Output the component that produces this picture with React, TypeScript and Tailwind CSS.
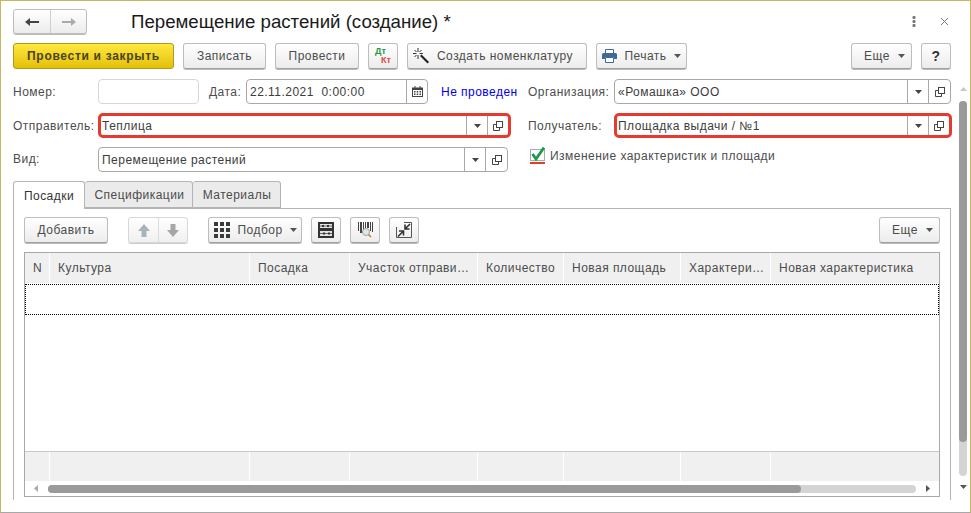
import React from 'react';

const Caret = ({ color = '#444' }: { color?: string }) => (
  <svg width="7" height="4" viewBox="0 0 7 4" className="shrink-0">
    <path d="M0 0h7L3.500 4z" fill={color} />
  </svg>
);

const OpenIcon = () => (
  <svg width="10" height="10" viewBox="0 0 10 10" fill="none" stroke="#444" strokeWidth="1">
    <rect x="3.500" y="0.500" width="6" height="6" />
    <path d="M3 3.500H0.500v6h6V7" />
  </svg>
);

const CalendarIcon = () => (
  <svg width="11" height="11" viewBox="0 0 11 11">
    <path d="M0 1.500h11V11H0z" fill="#444" />
    <path d="M1 4h9v6H1z" fill="#fff" />
    <path d="M2.500 0h1v2.500h-1zM7.500 0h1v2.500h-1zM2 5h1.500v1.500H2zM4.700 5h1.500v1.500H4.700zM7.500 5H9v1.500H7.500zM2 7.500h1.500V9H2zM4.700 7.500h1.500V9H4.700zM7.500 7.500H9V9H7.500z" fill="#444" />
  </svg>
);

const Btn = ({ className = '', children }: { className?: string; children?: React.ReactNode }) => (
  <div
    className={`flex h-[26px] shrink-0 items-center justify-center rounded-[3px] border border-[#bdbdbd] border-b-[#a0a0a0] bg-gradient-to-b from-white to-[#ececec] shadow-[0_1px_0_#bbb] ${className}`}
  >
    {children}
  </div>
);

const Field = ({
  className,
  text,
  red = false,
  caret = true,
  open = true,
}: {
  className: string;
  text: string;
  red?: boolean;
  caret?: boolean;
  open?: boolean;
}) => (
  <div
    className={`flex h-[25px] shrink-0 items-center bg-white ${
      red ? 'rounded-[5px] border-[3px] border-[#e63a2e]' : 'rounded-[4px] border border-[#a8a8a8]'
    } ${className}`}
  >
    <span className={`flex-1 truncate whitespace-pre text-[#3c3c3c] ${red ? 'pl-px' : 'pl-[3px]'}`}>{text}</span>
    {caret && (
      <span className="flex h-full w-[21px] items-center justify-center border-l border-[#a8a8a8]">
        <Caret />
      </span>
    )}
    {open && (
      <span className={`flex h-full items-center justify-center border-l border-[#a8a8a8] ${red ? 'w-[21px]' : 'w-[22px]'}`}>
        <OpenIcon />
      </span>
    )}
  </div>
);

const columns = [
  { label: 'N', width: 'w-[24px]' },
  { label: 'Культура', width: 'w-[199px]' },
  { label: 'Посадка', width: 'w-[99px]' },
  { label: 'Участок отправи…', width: 'w-[127px]' },
  { label: 'Количество', width: 'w-[85px]' },
  { label: 'Новая площадь', width: 'w-[116px]' },
  { label: 'Характери…', width: 'w-[89px]' },
  { label: 'Новая характеристика', width: 'w-[168px]' },
];

export default function App() {
  return (
    <div
      className="flex h-[513px] w-[971px] flex-col overflow-hidden border border-[#c8b660] border-b-[#a8a8a8] bg-white text-[12px] tracking-[0.47px] text-[#4c4c4c]"
      style={{ fontFamily: '"Liberation Sans", Arial, sans-serif' }}
    >
      {/* title row */}
      <div className="flex h-[25px] shrink-0 items-center pl-3 mt-2">
        <div className="flex h-[25px] w-[74px] rounded-[3px] border border-[#bdbdbd] bg-gradient-to-b from-white to-[#ececec] shadow-[0_1px_0_#bbb]">
          <span className="flex w-[37px] items-center justify-center border-r border-[#cfcfcf]">
            <svg width="14" height="8" viewBox="0 0 14 8"><path d="M0 4l5-4v3h9v2H5v3z" fill="#444" /></svg>
          </span>
          <span className="flex flex-1 items-center justify-center">
            <svg width="14" height="8" viewBox="0 0 14 8"><path d="M14 4L9 0v3H0v2h9v3z" fill="#aaa" /></svg>
          </span>
        </div>
        <h1 className="ml-[44px] text-[18.67px] font-normal tracking-normal text-[#1a1a1a]">
          Перемещение растений (создание) *
        </h1>
        <div className="ml-auto flex items-center pr-[21px]">
          <svg width="4" height="11" viewBox="0 0 4 11" fill="#777">
            <rect x="0.500" y="0" width="3" height="3" rx="1" />
            <rect x="0.500" y="4" width="3" height="3" rx="1" />
            <rect x="0.500" y="8" width="3" height="3" rx="1" />
          </svg>
          <svg width="9" height="9" viewBox="0 0 9 9" className="ml-[24px]" stroke="#777" strokeWidth="1">
            <path d="M1 1l7 7M8 1L1 8" />
          </svg>
        </div>
      </div>

      <div className="mt-[9px] flex flex-1 pl-3">
        <div className="flex w-[939px] shrink-0 flex-col">
          {/* command bar */}
          <div className="flex gap-[9px] pr-px">
            <div className="flex h-[26px] w-[161px] items-center justify-center rounded-[3px] border border-[#b09a20] bg-gradient-to-b from-[#ffe83c] to-[#e4c000] font-bold tracking-[0.7px] text-[#4a4420]">
              Провести и закрыть
            </div>
            <Btn className="w-[83px]">Записать</Btn>
            <Btn className="w-[84px]">Провести</Btn>
            <Btn className="w-[30px]">
              <span className="flex flex-col text-[9px] font-bold leading-[9px] tracking-normal">
                <span className="text-[#1f9a4c]">Дт</span>
                <span className="ml-[6px] text-[#e2454a]">Кт</span>
              </span>
            </Btn>
            <Btn className="w-[180px] gap-[8px] pr-[8px]">
              <svg width="16" height="16" viewBox="0 0 16 16">
                <path d="M7 8l1.500-1.500L16 14l-1.500 1.500z" fill="#222" />
                <path d="M5 0v4M5 7v4M0 5.500h3.500M6.500 5.500H10M1.500 2l2 2M8.500 2l-2 2M1.500 9l2-2" stroke="#333" strokeWidth="1" />
              </svg>
              <span>Создать номенклатуру</span>
            </Btn>
            <Btn className="w-[91px] gap-[7px]">
              <svg width="15" height="14" viewBox="0 0 15 14">
                <path d="M3.500 0.500h8v4h-8z" fill="#fff" stroke="#3f6a94" />
                <path d="M1.500 4h12A1.500 1.500 0 0 1 15 5.500V10h-3V8H3v2H0V5.500A1.500 1.500 0 0 1 1.500 4z" fill="#3f6a94" />
                <path d="M3.500 8.500h8v5h-8z" fill="#fff" stroke="#3f6a94" />
              </svg>
              <span>Печать</span>
              <Caret color="#555" />
            </Btn>
            <Btn className="ml-auto w-[61px] gap-[8px] pl-[6px]">
              <span>Еще</span>
              <Caret color="#555" />
            </Btn>
            <Btn className="w-[30px] text-[14px] font-bold text-[#333]">?</Btn>
          </div>

          {/* form rows */}
          <div className="mt-[10px] flex items-center">
            <span className="w-[85px] shrink-0">Номер:</span>
            <div className="h-[25px] w-[101px] shrink-0 rounded-[4px] border border-[#d8d8d8] bg-white" />
            <span className="ml-[10px] w-[37px] shrink-0">Дата:</span>
            <Field className="w-[182px]" text="22.11.2021  0:00:00" caret={false} open={false} />
            <span className="-ml-[22px] flex h-[25px] w-[22px] items-center justify-center border-l border-[#a8a8a8]">
              <CalendarIcon />
            </span>
            <span className="ml-[13px] w-[87px] shrink-0 text-[#0000f0]">Не проведен</span>
            <span className="w-[86px] shrink-0">Организация:</span>
            <Field className="w-[337px]" text="«Ромашка» ООО" />
          </div>

          <div className="mt-[9px] flex items-center">
            <span className="w-[85px] shrink-0">Отправитель:</span>
            <Field className="w-[413px]" text="Теплица" red />
            <span className="ml-[17px] w-[86px] shrink-0">Получатель:</span>
            <Field className="w-[338px]" text="Площадка выдачи / №1" red />
          </div>

          <div className="mt-[9px] flex h-[25px] items-start">
            <span className="mt-[3px] w-[85px] shrink-0">Вид:</span>
            <Field className="w-[410px]" text="Перемещение растений" />
            <div className="ml-[22px] flex items-center">
              <span className="relative mt-[2px] h-[15px] w-[15px] border-b-2 border-[#e63a2e]">
                <span className="absolute bottom-[1px] left-0 h-[12px] w-[15px] border border-[#aaa] bg-white" />
                <svg width="15" height="16" viewBox="0 0 15 16" className="absolute -top-[3px] left-0" fill="none" stroke="#1f9a4c" strokeWidth="2.800">
                  <path d="M2.500 8l3.500 5L14 1.500" />
                </svg>
              </span>
              <span className="ml-[5px] mt-px leading-[15px]">Изменение характеристик и площади</span>
            </div>
          </div>

          {/* tabs */}
          <div className="relative z-10 mt-[9px] flex h-[28px] -mb-px">
            <div className="flex w-[72px] items-center justify-center rounded-t-[3px] border border-b-0 border-[#b4b4b4] bg-white text-[#333]">
              Посадки
            </div>
            <div className="flex h-[27px] w-[108px] items-center justify-center rounded-t-[3px] border border-l-0 border-[#b4b4b4] bg-[#ebebeb] pl-[2px]">
              Спецификации
            </div>
            <div className="flex h-[27px] w-[88px] items-center justify-center rounded-t-[3px] border border-l-0 border-[#b4b4b4] bg-[#ebebeb] pl-px">
              Материалы
            </div>
          </div>

          <div className="flex h-[292px] w-[938px] flex-col border-x border-t border-[#b4b4b4] px-[10px] pt-2">
            {/* table toolbar */}
            <div className="flex h-[26px] shrink-0">
              <Btn className="w-[84px]">Добавить</Btn>
              <div className="ml-[20px] flex h-[26px] w-[60px] rounded-[3px] border border-[#d8d8d8] bg-gradient-to-b from-white to-[#f0f0f0] shadow-[0_1px_0_#ccc]">
                <span className="flex w-[30px] items-center justify-center border-r border-[#dcdcdc]">
                  <svg width="12" height="13" viewBox="0 0 12 13"><path d="M6 0l6 7H8.500v6h-5V7H0z" fill="#a6b4bc" /></svg>
                </span>
                <span className="flex flex-1 items-center justify-center">
                  <svg width="12" height="13" viewBox="0 0 12 13"><path d="M6 13l6-7H8.500V0h-5v6H0z" fill="#a6a6a6" /></svg>
                </span>
              </div>
              <Btn className="ml-[20px] w-[94px] gap-[7px] pl-px">
                <svg width="16" height="16" viewBox="0 0 16 16" fill="#3a3a3a">
                  <path d="M0 0h4v4H0zM6 0h4v4H6zM12 0h4v4h-4zM0 6h4v4H0zM6 6h4v4H6zM12 6h4v4h-4zM0 12h4v4H0zM6 12h4v4H6zM12 12h4v4h-4z" />
                </svg>
                <span>Подбор</span>
                <Caret color="#555" />
              </Btn>
              <Btn className="ml-[9px] w-[30px]">
                <svg width="16" height="16" viewBox="0 0 16 16">
                  <path d="M0 0h16v16H0z" fill="#333" />
                  <path d="M2 2h12v4H2zM2 9h12v5H2z" fill="#e4e4e4" />
                  <path d="M2 4h12M2 11.500h12" stroke="#666" />
                  <path d="M4 3h2v2H4zM9 3h2v2H9zM5 10.500h2v2H5zM10 10.500h2v2h-2z" fill="#333" />
                </svg>
              </Btn>
              <Btn className="ml-[9px] w-[30px]">
                <svg width="15" height="16" viewBox="0 0 15 16">
                  <path d="M0 0h1v9H0zM2 0h2v11H2zM5 0h1v8H5zM7 0h1v6H7zM9 0h2v6H9zM12 0h1v9h-1zM14 0h1v10h-1z" fill="#444" />
                  <circle cx="8" cy="10" r="3.500" fill="#dbe8f2" stroke="#a8a090" />
                  <path d="M10.500 12.500l2.500 2.500" stroke="#b08840" strokeWidth="1.600" />
                </svg>
              </Btn>
              <Btn className="ml-[9px] w-[30px]">
                <svg width="16" height="16" viewBox="0 0 16 16" fill="none">
                  <path d="M8 .5H15.500V15.500H.5V5" stroke="#555" />
                  <path d="M14 2L9.500 6.500M9 2.500V7h4.500" stroke="#333" strokeWidth="1.600" />
                  <path d="M2 14.500L7 9.500M7.500 13.500V9H3" stroke="#333" strokeWidth="1.600" />
                </svg>
              </Btn>
              <Btn className="ml-auto w-[61px] gap-[8px] pl-[6px]">
                <span>Еще</span>
                <Caret color="#555" />
              </Btn>
            </div>

            {/* table */}
            <div className="mt-[9px] flex h-[245px] w-[916px] flex-col border border-[#a8a8a8]">
              <div className="flex h-[30px] shrink-0 gap-px">
                {columns.map((c) => (
                  <div key={c.label} className={`flex items-center truncate bg-[#f0f0f0] pl-2 ${c.width}`}>
                    {c.label}
                  </div>
                ))}
              </div>
              <div className="mt-px h-[31px] shrink-0 border border-dotted border-black" />
              <div className="flex-1" />
              <div className="flex h-[30px] shrink-0 gap-px border-t border-[#c8c8c8]">
                {columns.map((c) => (
                  <div key={c.label} className={`bg-[#f0f0f0] ${c.width}`} />
                ))}
              </div>
              <div className="flex h-[15px] shrink-0 items-center">
                <svg width="4" height="7" viewBox="0 0 4 7" className="ml-[9px]"><path d="M4 0v7L0 3.500z" fill="#aaa" /></svg>
                <div className="ml-[10px] h-[8px] w-[868px] rounded-full bg-[#d4d4d4]">
                  <div className="h-full w-[753px] rounded-full bg-[#9a9a9a]" />
                </div>
                <svg width="4" height="7" viewBox="0 0 4 7" className="ml-[10px]"><path d="M0 0v7l4-3.500z" fill="#555" /></svg>
              </div>
            </div>
          </div>
        </div>

        {/* page scrollbar */}
        <div className="ml-[7px] flex w-[8px] shrink-0 flex-col items-center pt-[44px]">
          <svg width="7" height="4" viewBox="0 0 7 4"><path d="M3.500 0L7 4H0z" fill="#c8c8c8" /></svg>
          <div className="mt-[10px] h-[375px] w-[8px] rounded-full bg-[#d4d4d4]">
            <div className="h-[341px] w-full rounded-full bg-[#9a9a9a]" />
          </div>
          <svg width="7" height="4" viewBox="0 0 7 4" className="mt-[9px]"><path d="M0 0h7L3.500 4z" fill="#555" /></svg>
        </div>
      </div>
    </div>
  );
}
